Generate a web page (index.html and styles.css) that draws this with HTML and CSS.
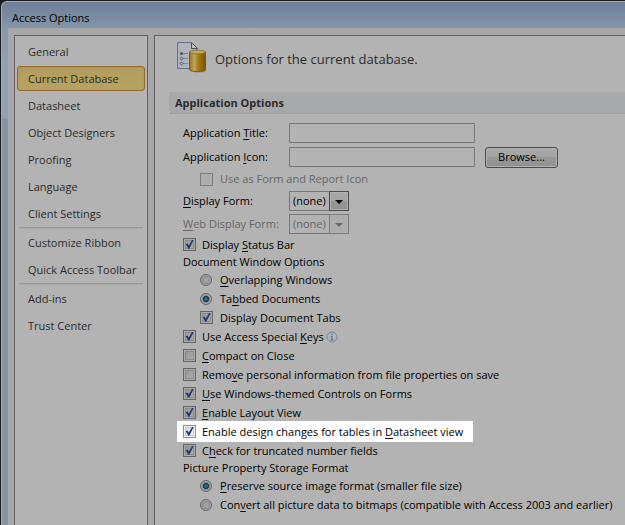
FILE: index.html
```html
<!DOCTYPE html>
<html lang="en">
<head>
<meta charset="utf-8">
<title>Access Options</title>
<link rel="stylesheet" href="styles.css">
</head>
<body>
<div class="window">
  <header class="titlebar">Access Options</header>
  <div class="client">
    <nav class="sidebar" aria-label="Option categories">
      <a class="nav-item" href="#">General</a>
      <a class="nav-item selected" href="#" aria-current="page">Current Database</a>
      <a class="nav-item" href="#">Datasheet</a>
      <a class="nav-item" href="#">Object Designers</a>
      <a class="nav-item" href="#">Proofing</a>
      <a class="nav-item" href="#">Language</a>
      <a class="nav-item" href="#">Client Settings</a>
      <hr class="nav-sep">
      <a class="nav-item" href="#">Customize Ribbon</a>
      <a class="nav-item" href="#">Quick Access Toolbar</a>
      <hr class="nav-sep">
      <a class="nav-item" href="#">Add-ins</a>
      <a class="nav-item" href="#">Trust Center</a>
    </nav>
    <main class="content">
      <div class="intro">
        <svg class="intro-icon" width="32" height="32" viewBox="0 0 32 32" aria-hidden="true">
          <defs>
            <linearGradient id="gold" x1="0" x2="1" y1="0" y2="0">
              <stop offset="0" stop-color="#96701c"/>
              <stop offset=".3" stop-color="#bfa861"/>
              <stop offset=".55" stop-color="#a67a10"/>
              <stop offset="1" stop-color="#7b5206"/>
            </linearGradient>
          </defs>
          <path d="M1.500 0.500H15L20.500 6.500V26.500H1.500Z" fill="#b0b3b8" stroke="#62728b"/>
          <path d="M15.500 0.500V6.500H21.500Z" fill="#bcbfc3" stroke="#43536e"/>
          <path d="M7 11.500H12M7 16.500H12M7 21.500H12" stroke="#7485a0"/>
          <circle cx="5.500" cy="11.500" r="1.500" fill="#43536e"/>
          <circle cx="5.500" cy="16.500" r="1.300" fill="#b3b3b3" stroke="#566884"/>
          <circle cx="5.500" cy="21.500" r="1.300" fill="#b3b3b3" stroke="#566884"/>
          <ellipse cx="23" cy="28.500" rx="7.500" ry="2" fill="#979797"/>
          <path d="M13.500 10V27.500C13.500 30.300 29.500 30.300 29.500 27.500V10Z" fill="url(#gold)" stroke="#80590f"/>
          <ellipse cx="21.500" cy="10" rx="8" ry="1.800" fill="#c0ad6c" stroke="#92742d"/>
        </svg>
        <span>Options for the current database.</span>
      </div>
      <h2 class="section-title">Application Options</h2>
      <form class="options">
        <div class="field">
          <label for="app-title">Application <u>T</u>itle:</label>
          <input class="textbox" id="app-title" type="text">
        </div>
        <div class="field">
          <label for="app-icon">Application <u>I</u>con:</label>
          <input class="textbox" id="app-icon" type="text">
          <button class="browse" type="button">Browse...</button>
        </div>
        <div class="choice indent tall off"><input type="checkbox" id="use-icon" disabled><label for="use-icon">Use as Form and Report Icon</label></div>
        <div class="field combo-field">
          <label for="display-form"><u>D</u>isplay Form:</label>
          <span class="combo"><select id="display-form"><option>(none)</option></select><span class="arrow"></span></span>
        </div>
        <div class="field combo-field off">
          <label for="web-form"><u>W</u>eb Display Form:</label>
          <span class="combo"><select id="web-form" disabled><option>(none)</option></select><span class="arrow"></span></span>
        </div>
        <div class="choice"><input type="checkbox" id="status" checked><label for="status">Display <u>S</u>tatus Bar</label></div>
        <h3 class="group-title">Document Window Options</h3>
        <div class="choice indent"><input type="radio" name="docs" id="overlap"><label for="overlap"><u>O</u>verlapping Windows</label></div>
        <div class="choice indent"><input type="radio" name="docs" id="tabbed" checked><label for="tabbed">Ta<u>b</u>bed Documents</label></div>
        <div class="choice indent"><input type="checkbox" id="tabs" checked><label for="tabs">Display Document Tabs</label></div>
        <div class="choice">
          <input type="checkbox" id="keys" checked><label for="keys">Use Access Special <u>K</u>eys</label>
          <svg class="info" width="12" height="12" viewBox="0 0 12 12" aria-hidden="true">
            <circle cx="6" cy="6" r="5" fill="#b0b5bb" stroke="#7388a7"/>
            <path d="M6 2.500V4M6 5V9M4.800 5.500H6M4.500 9H7.500" stroke="#50678c" fill="none"/>
          </svg>
        </div>
        <div class="choice"><input type="checkbox" id="compact"><label for="compact"><u>C</u>ompact on Close</label></div>
        <div class="choice"><input type="checkbox" id="remove"><label for="remove">Remo<u>v</u>e personal information from file properties on save</label></div>
        <div class="choice"><input type="checkbox" id="themed" checked><label for="themed"><u>U</u>se Windows-themed Controls on Forms</label></div>
        <div class="choice"><input type="checkbox" id="layout" checked><label for="layout"><u>E</u>nable Layout View</label></div>
        <div class="choice highlight"><input type="checkbox" id="design" checked><label for="design">Enable design changes for tables in <u>D</u>atasheet view</label></div>
        <div class="choice"><input type="checkbox" id="check" checked><label for="check">C<u>h</u>eck for truncated number fields</label></div>
        <h3 class="group-title">Picture Property Storage Format</h3>
        <div class="choice indent"><input type="radio" name="pics" id="preserve" checked><label for="preserve"><u>P</u>reserve source image format (smaller file size)</label></div>
        <div class="choice indent"><input type="radio" name="pics" id="convert"><label for="convert">Con<u>v</u>ert all picture data to bitmaps (compatible with Access 2003 and earlier)</label></div>
      </form>
    </main>
  </div>
</div>
</body>
</html>
```
FILE: styles.css
```css
* {
  box-sizing: border-box;
}

body {
  margin: 0;
  background: #1c1a1f;
  color: #000;
  font: 11px/16px "Open Sans", "Noto Sans", sans-serif;
  overflow: hidden;
}

input,
select,
button {
  margin: 0;
  font: inherit;
  color: inherit;
}

u {
  text-underline-offset: 2px;
}

.window {
  display: flex;
  flex-direction: column;
  min-height: 100vh;
  margin: 1px 0 0 1px;
  padding-left: 6px;
  border: solid #a3adb8;
  border-width: 1px 0 0 1px;
  border-top-left-radius: 6px;
  background: linear-gradient(#6b7f98, #8496a8 26px, #8fa1b5 60px, #8fa1b5 116px, #8395a5 117px);
}

.titlebar {
  height: 26px;
  padding-left: 4px;
  font-size: 11px;
  line-height: 32px;
}

.client {
  display: flex;
  flex: 1;
  gap: 6px;
  padding: 7px 0 0 6px;
  background: #a7a7a7;
}

.sidebar {
  display: flex;
  flex-direction: column;
  flex: none;
  gap: 2px;
  width: 134px;
  padding: 3px 2px;
  border: solid #606066;
  border-width: 1px 1px 0;
  background: #b3b3b3;
}

.nav-item {
  height: 25px;
  padding-left: 10px;
  border: 1px solid transparent;
  border-radius: 3px;
  color: #2b2b2b;
  font-size: 11px;
  line-height: 23px;
  text-decoration: none;
  white-space: nowrap;
}

.nav-item.selected {
  border-color: #95692f;
  background: linear-gradient(#b39b61, #b5a15d 50%, #b6a366);
  box-shadow: inset 0 0 1px #a87f35;
}

.nav-sep {
  width: 124px;
  height: 2px;
  margin: -1px auto;
  border: 0;
  border-top: 1px solid #999;
  background: #a9a9a9;
}

.content {
  flex: 1;
  min-width: 0;
  padding-left: 14px;
  border: solid #606066;
  border-width: 1px 0 0 1px;
  background: #b3b3b3;
}

.intro {
  display: flex;
  align-items: center;
  gap: 7px;
  height: 56px;
  padding: 0 0 10px 7px;
  color: #2b2b2b;
  font-size: 13px;
}

.intro-icon {
  margin-bottom: 2px;
}

.section-title {
  height: 22px;
  margin: 0;
  padding-left: 6px;
  border-bottom: 1px solid #9d9ea0;
  background: #a8a9ab;
  color: #2b2b2b;
  font-size: 11px;
  line-height: 21px;
}

.options {
  padding: 7px 0 10px 14px;
  white-space: nowrap;
}

.field {
  display: grid;
  grid-template-columns: 106px 186px 83px;
  align-items: center;
  height: 24px;
}

.combo-field {
  height: 23px;
}

.textbox {
  height: 20px;
  padding: 0 4px;
  border: 1px solid #77787b;
  background: #b3b3b3;
}

.browse {
  height: 21px;
  margin-left: 10px;
  padding: 0;
  border: 1px solid #4b4b4b;
  border-radius: 3px;
  background: linear-gradient(#a9a9a9, #a3a3a3 50%, #979797 50%, #919191);
  box-shadow: inset 0 0 0 1px #b0b0b0;
  line-height: 18px;
}

.combo {
  position: relative;
  width: 60px;
  height: 20px;
}

.combo select {
  appearance: none;
  display: block;
  width: 100%;
  height: 100%;
  padding: 0 3px;
  border: 1px solid #77787b;
  border-radius: 0;
  background: #b3b3b3;
  opacity: 1;
}

.arrow {
  position: absolute;
  inset: 0 0 0 auto;
  width: 20px;
  border: 1px solid #4b4b4b;
  background: linear-gradient(#a9a9a9, #a3a3a3 50%, #979797 50%, #919191);
  box-shadow: inset 0 0 0 1px #b0b0b0;
  pointer-events: none;
}

.arrow::after {
  content: "";
  position: absolute;
  top: 8px;
  left: 5px;
  border: solid transparent;
  border-top-color: currentColor;
  border-width: 4px 4px 0;
}

.off {
  color: #666;
}

.off .arrow {
  border-color: #7b7b7b;
  background: #adadad;
}

.choice {
  display: flex;
  align-items: center;
  gap: 6px;
  width: fit-content;
  height: 19px;
}

.choice.tall {
  height: 20px;
}

.indent {
  margin-left: 17px;
  gap: 7px;
}

.choice input {
  position: relative;
  flex: none;
  appearance: none;
  width: 13px;
  height: 13px;
  border: 1px solid #646567;
  background: linear-gradient(135deg, #919396, #b0b0b0);
  box-shadow: inset 0 0 0 1px #aaa, inset 0 0 0 2px #888b8f;
}

.choice input:disabled {
  border-color: #7d7d7d;
  background: #adafad;
  box-shadow: none;
}

.choice input[type="checkbox"]:checked::before {
  content: "";
  position: absolute;
  inset: 1px;
  background: #26386f;
  clip-path: polygon(8% 48%, 28% 38%, 42% 62%, 78% 0, 96% 0, 48% 98%, 38% 98%);
}

.choice input[type="radio"] {
  width: 12px;
  height: 12px;
  margin-right: 1px;
  border-radius: 50%;
}

.choice input[type="radio"]:checked {
  background: radial-gradient(circle at 50% 50%, #4f8aa5 0, #164a6b 2px, #10283f 3px, #a3a3a3 4px);
}

.info {
  margin-left: -4px;
}

.group-title {
  height: 16px;
  margin: 0;
  font-size: inherit;
  font-weight: normal;
  line-height: 16px;
}

.highlight {
  height: 21px;
  margin: -1px 0 -1px -6px;
  padding: 0 10px 0 6px;
  background: #fff;
}

.highlight input {
  border-color: #8e8f8f;
  background: linear-gradient(135deg, #d0d5dc, #fbfbfb);
  box-shadow: inset 0 0 0 1px #f4f4f4, inset 0 0 0 2px #c3c8d0;
}
```
